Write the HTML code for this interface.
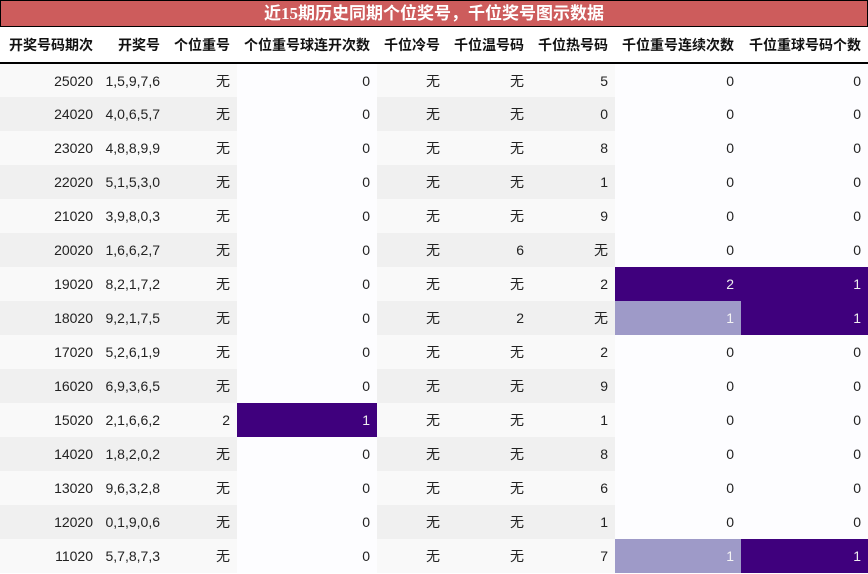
<!DOCTYPE html>
<html><head><meta charset="utf-8"><style>
*{margin:0;padding:0;box-sizing:border-box}
body{width:868px;height:574px;background:#fff;font-family:"Liberation Sans","Noto Sans CJK SC",sans-serif;overflow:hidden}
.title{position:absolute;left:0;top:0;width:868px;height:27px;background:#cd5c5c;border:1px solid #000;color:#fff;font-weight:bold;font-size:17px;text-align:center;line-height:25px;font-family:"Liberation Serif","Noto Sans CJK SC",sans-serif}
table{position:absolute;left:0;top:27px;border-collapse:collapse;table-layout:fixed;width:868px}
th,td{text-align:right;padding:0 7px 0 0;font-size:14px;white-space:nowrap;color:#222}
th{height:36px;font-weight:bold;border-bottom:2px solid #000;background:#fff;color:#111}
td{height:34px}
tr:nth-child(odd) td{background:#f9f9f9}
tr:nth-child(even) td{background:#f0f0f0}
tr td.w{background:#fdfdff}
tr td.d{background:#3f007d;color:#eee}
tr td.l{background:#9e9ac8;color:#f4f4f4}
</style></head><body>
<div class="title">近15期历史同期个位奖号，千位奖号图示数据</div>
<table>
<colgroup><col style="width:100px"><col style="width:67px"><col style="width:70px"><col style="width:140px"><col style="width:70px"><col style="width:84px"><col style="width:84px"><col style="width:126px"><col style="width:127px"></colgroup>
<thead><tr><th>开奖号码期次</th><th>开奖号</th><th>个位重号</th><th>个位重号球连开次数</th><th>千位冷号</th><th>千位温号码</th><th>千位热号码</th><th>千位重号连续次数</th><th>千位重球号码个数</th></tr></thead>
<tbody>
<tr><td>25020</td><td>1,5,9,7,6</td><td>无</td><td class="w">0</td><td>无</td><td>无</td><td>5</td><td class="w">0</td><td class="w">0</td></tr>
<tr><td>24020</td><td>4,0,6,5,7</td><td>无</td><td class="w">0</td><td>无</td><td>无</td><td>0</td><td class="w">0</td><td class="w">0</td></tr>
<tr><td>23020</td><td>4,8,8,9,9</td><td>无</td><td class="w">0</td><td>无</td><td>无</td><td>8</td><td class="w">0</td><td class="w">0</td></tr>
<tr><td>22020</td><td>5,1,5,3,0</td><td>无</td><td class="w">0</td><td>无</td><td>无</td><td>1</td><td class="w">0</td><td class="w">0</td></tr>
<tr><td>21020</td><td>3,9,8,0,3</td><td>无</td><td class="w">0</td><td>无</td><td>无</td><td>9</td><td class="w">0</td><td class="w">0</td></tr>
<tr><td>20020</td><td>1,6,6,2,7</td><td>无</td><td class="w">0</td><td>无</td><td>6</td><td>无</td><td class="w">0</td><td class="w">0</td></tr>
<tr><td>19020</td><td>8,2,1,7,2</td><td>无</td><td class="w">0</td><td>无</td><td>无</td><td>2</td><td class="d">2</td><td class="d">1</td></tr>
<tr><td>18020</td><td>9,2,1,7,5</td><td>无</td><td class="w">0</td><td>无</td><td>2</td><td>无</td><td class="l">1</td><td class="d">1</td></tr>
<tr><td>17020</td><td>5,2,6,1,9</td><td>无</td><td class="w">0</td><td>无</td><td>无</td><td>2</td><td class="w">0</td><td class="w">0</td></tr>
<tr><td>16020</td><td>6,9,3,6,5</td><td>无</td><td class="w">0</td><td>无</td><td>无</td><td>9</td><td class="w">0</td><td class="w">0</td></tr>
<tr><td>15020</td><td>2,1,6,6,2</td><td>2</td><td class="d">1</td><td>无</td><td>无</td><td>1</td><td class="w">0</td><td class="w">0</td></tr>
<tr><td>14020</td><td>1,8,2,0,2</td><td>无</td><td class="w">0</td><td>无</td><td>无</td><td>8</td><td class="w">0</td><td class="w">0</td></tr>
<tr><td>13020</td><td>9,6,3,2,8</td><td>无</td><td class="w">0</td><td>无</td><td>无</td><td>6</td><td class="w">0</td><td class="w">0</td></tr>
<tr><td>12020</td><td>0,1,9,0,6</td><td>无</td><td class="w">0</td><td>无</td><td>无</td><td>1</td><td class="w">0</td><td class="w">0</td></tr>
<tr><td>11020</td><td>5,7,8,7,3</td><td>无</td><td class="w">0</td><td>无</td><td>无</td><td>7</td><td class="l">1</td><td class="d">1</td></tr>
</tbody></table>
</body></html>
